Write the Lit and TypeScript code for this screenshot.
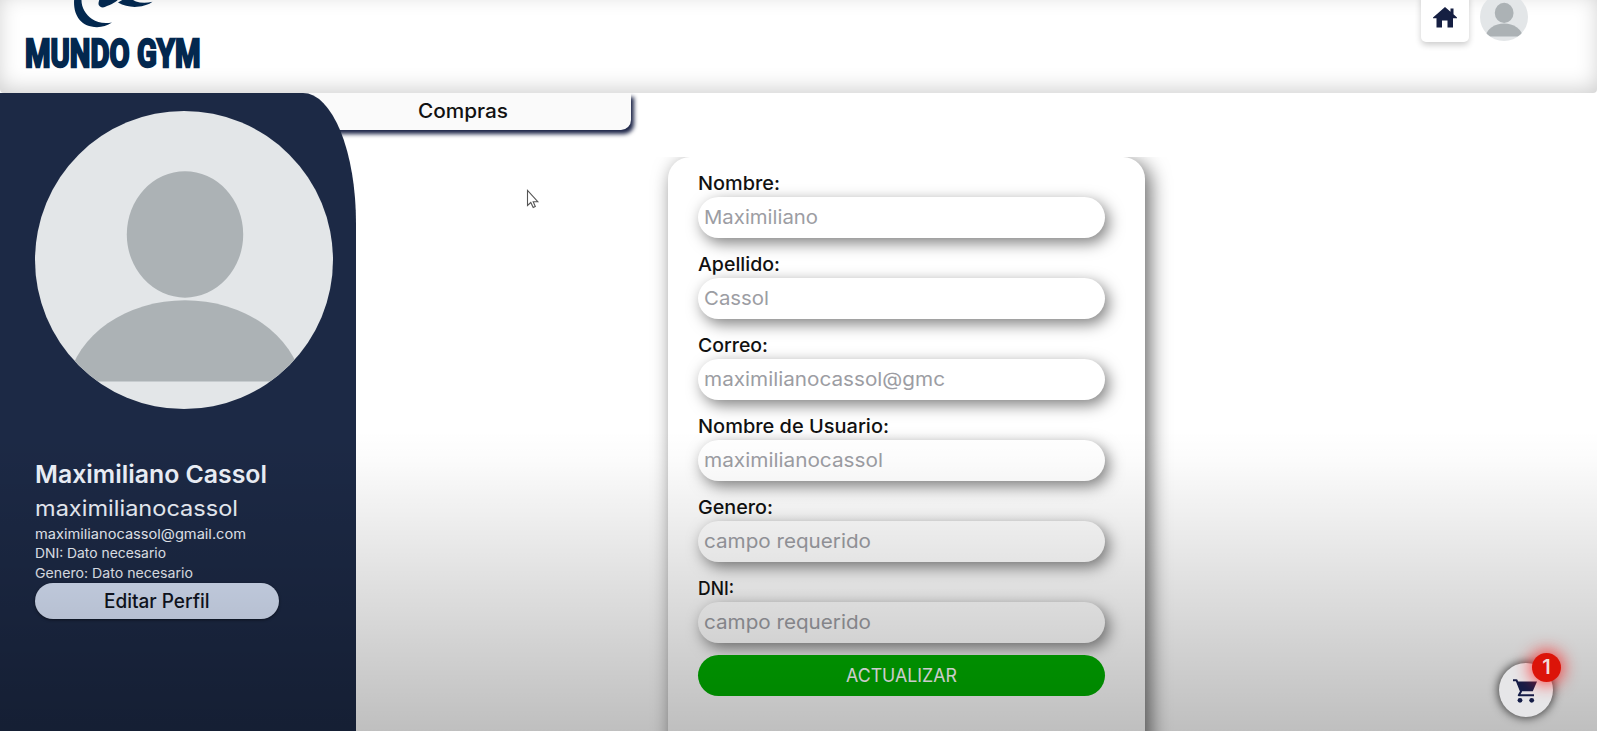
import { LitElement, html, css } from "lit";
import { customElement, property } from "lit/decorators.js";

/** Text run set to a fixed advance width, baseline placed inside a block of fixed height. */
@customElement("fit-text")
class FitText extends LitElement {
  @property() text = "";
  @property({ type: Number }) w = 100;
  @property({ type: Number }) h = 20;
  @property({ type: Number }) base = 16;
  static styles = css`
    :host { display: block; flex: none; }
    svg { display: block; overflow: visible; }
    text { fill: currentColor; stroke: currentColor; stroke-width: var(--stroke, 0); }
  `;
  render() {
    return html`<svg width=${this.w} height=${this.h}>
      <text x="0" y=${this.base} textLength=${this.w} lengthAdjust="spacingAndGlyphs">${this.text}</text>
    </svg>`;
  }
}

@customElement("user-avatar")
class UserAvatar extends LitElement {
  static styles = css`
    :host { display: block; flex: none; border-radius: 50%; overflow: hidden; background: #e3e6e8; }
    svg { display: block; width: 100%; height: 100%; }
  `;
  render() {
    return html`<svg viewBox="0 0 297 297">
      <g fill="#acb2b5">
        <ellipse cx="149.5" cy="123" rx="58" ry="63" />
        <path d="M32.8 269.500A118 95 0 0 1 266.2 269.500Z" />
      </g>
    </svg>`;
  }
}

const FIELDS = [
  { label: "Nombre:", lw: 82, value: "Maximiliano", vw: 114 },
  { label: "Apellido:", lw: 82, value: "Cassol", vw: 65 },
  { label: "Correo:", lw: 70, value: "maximilianocassol@gmc", vw: 241 },
  { label: "Nombre de Usuario:", lw: 191, value: "maximilianocassol", vw: 179 },
  { label: "Genero:", lw: 75, value: "campo requerido", vw: 167 },
  { label: "DNI:", lw: 36, value: "campo requerido", vw: 167 },
];

@customElement("app-root")
class AppRoot extends LitElement {
  static styles = css`
    :host {
      display: block; position: relative; height: 731px; overflow: hidden;
      background: #fff; font-family: Inter, "Open Sans", sans-serif; color: #111;
    }
    * { box-sizing: border-box; }
    .page { display: flex; flex-direction: column; height: 100%; }
    header {
      flex: none; height: 93px; display: flex; justify-content: space-between;
      padding: 0 69px 0 24px; border-radius: 0 0 4px 4px;
      box-shadow: inset 0 -5px 22px -2px rgba(0, 0, 0, 0.2);
    }
    .brand { color: #03284f; display: flex; flex-direction: column; }
    .brand svg { display: block; }
    .brand fit-text {
      font: 700 39px "Liberation Sans Narrow", "Roboto", sans-serif; --stroke: 2.4px; margin-left: 1px;
    }
    .actions { display: flex; gap: 11px; margin-top: -7px; height: 49px; }
    .home {
      width: 48px; height: 49px; border-radius: 5px; background: #fff; display: flex;
      justify-content: center; padding-top: 14px; box-shadow: 0 3px 6px rgba(0, 0, 0, 0.2);
    }
    .home svg { width: 24px; height: 21px; fill: #151f42; }
    .actions user-avatar { width: 48px; height: 48px; }
    .body { flex: 1; display: flex; min-height: 0; }
    aside {
      position: relative; z-index: 1; width: 356px; flex: none; background: #1c2945;
      border-top-right-radius: 53px 130px; padding: 18px 0 0 35px; color: #eef2fa;
    }
    aside user-avatar { width: 298px; height: 298px; }
    .info { margin: 47px 0 0 0; }
    .name { font-size: 24.5px; font-weight: 600; }
    .user { font-size: 22px; }
    .small { font-size: 13.5px; }
    .edit {
      width: 244px; height: 36px; border-radius: 18px; background: #d8e3f8;
      color: #101522; display: flex; justify-content: center; font-size: 19.5px;
      box-shadow: 0 1px 3px rgba(0, 0, 0, 0.5);
    }
    .med { font-weight: 500; }
    main { flex: 1; display: flex; flex-direction: column; }
    .tab {
      width: 330px; height: 37px; margin-left: -55px; flex: none; background: #fafafa;
      border-radius: 0 0 10px 10px; box-shadow: 3px 4px 4px #1c2447;
      padding-left: 117px; font-size: 19.5px;
    }
    .clip { clip-path: inset(0 -40px -40px 0); margin-left: -55px; padding-left: 55px; }
    .form-area { margin-top: 27px; flex: 1; overflow: hidden; padding-left: 312px; }
    .card {
      width: 477px; height: 700px; border-radius: 22px; background: #fff; padding: 13px 30px;
      box-shadow: 5px 5px 20px rgba(0, 0, 0, 0.6);
    }
    .label { font-size: 19px; }
    .input {
      height: 41px; width: 407px; margin-bottom: 13px; border-radius: 21px; background: #fff;
      box-shadow: 4px 5px 15px rgba(0, 0, 0, 0.5); padding-left: 6px; color: #9c9da3; font-size: 19px;
    }
    .submit {
      height: 41px; width: 407px; margin-top: -1px; border-radius: 21px; background: #00ae00; color: #fff;
      display: flex; justify-content: center; font-size: 19px; position: relative;
    }
    .shade {
      position: absolute; inset: 430px 0 0 0; z-index: 2; pointer-events: none;
      background: linear-gradient(rgba(0,0,0,0), rgba(0,0,0,.015) 10%, rgba(0,0,0,.25));
    }
    .cart {
      position: absolute; z-index: 3; left: 1499px; top: 663px; width: 54px; height: 54px;
      border-radius: 50%; background: #e6e6e8; box-shadow: 0 0 10px 1px rgba(0, 0, 0, 0.7);
    }
    .cart svg { position: absolute; left: 13px; top: 15px; width: 26px; height: 26px; }
    .badge {
      position: absolute; left: 33px; top: -10px; width: 29px; height: 29px; border-radius: 50%;
      background: #dc1409; color: #f3dcd8; box-shadow: 0 0 16px 3px rgba(255, 20, 20, 0.7);
      font: 600 20px/29px Inter, sans-serif; text-align: center;
    }
    .cursor { position: absolute; left: 526px; top: 189px; z-index: 3; }
  `;

  render() {
    return html`
      <div class="page">
        <header>
          <div class="brand">
            <svg width="176" height="31" viewBox="24 0 176 31" fill="currentColor">
              <path d="M74.300 -2C72.500 14 80 27 97 27.200Q105 27 112 22.500Q100 24.500 92 19C85 14 81 7 81.500 -2Z" />
              <path d="M100 -2C98 3 98 5 100 6.500Q103 8.500 107 6C111 5 113 3 116 1.500L119 -1H124L118 2.500Q127 7.500 137 6.800Q147 6 152.500 1.800Q143 4 136 1.500L129 -2Z" />
            </svg>
            <fit-text text="MUNDO GYM" .w=${175.5} .h=${40} .base=${35.5}></fit-text>
          </div>
          <div class="actions">
            <div class="home"><svg viewBox="0 0 24 21"><path d="M12 0L17.500 4.800V1.500H20.500V7.300L24 10.500V11.200H20V20.500H14.500V13.500H9V20.500H3.500V11.200H0V10.500Z" /></svg></div>
            <user-avatar></user-avatar>
          </div>
        </header>
        <div class="body">
          <aside>
            <user-avatar></user-avatar>
            <div class="info">
              <fit-text class="name" text="Maximiliano Cassol" .w=${232} .h=${36} .base=${27}></fit-text>
              <fit-text class="user" text="maximilianocassol" .w=${203} .h=${29.5} .base=${23.5}></fit-text>
              <fit-text class="small" text="maximilianocassol@gmail.com" .w=${211} .h=${20} .base=${16.5}></fit-text>
              <fit-text class="small" text="DNI: Dato necesario" .w=${131} .h=${20} .base=${15.5}></fit-text>
              <fit-text class="small" text="Genero: Dato necesario" .w=${158} .h=${21.5} .base=${15.5}></fit-text>
              <div class="edit med"><fit-text text="Editar Perfil" .w=${105.5} .h=${36} .base=${25}></fit-text></div>
            </div>
          </aside>
          <main>
            <div class="clip"><div class="tab med"><fit-text text="Compras" .w=${90} .h=${37} .base=${25}></fit-text></div></div>
            <div class="form-area">
              <div class="card">
                ${FIELDS.map((f) => html`
                  <fit-text class="label med" .text=${f.label} .w=${f.lw} .h=${27} .base=${20}></fit-text>
                  <div class="input"><fit-text .text=${f.value} .w=${f.vw} .h=${41} .base=${27}></fit-text></div>
                `)}
                <div class="submit"><fit-text text="ACTUALIZAR" .w=${111} .h=${41} .base=${27}></fit-text></div>
              </div>
            </div>
          </main>
        </div>
      </div>
      <div class="shade"></div>
      <div class="cart">
        <svg viewBox="0 0 26 26">
          <path d="M1 2.200H4.500L9 13.500L6.800 17.200H22" fill="none" stroke="#141d47" stroke-width="2" stroke-linejoin="round" />
          <path d="M4.800 3.600H25L20.800 13.200H8.500Z" fill="#141d47" />
          <circle cx="8" cy="22.300" r="2.400" fill="#141d47" />
          <circle cx="19.700" cy="22.300" r="2.400" fill="#141d47" />
        </svg>
        <div class="badge">1</div>
      </div>
      <svg class="cursor" width="14" height="21" viewBox="0 0 14 21">
        <path d="M1.500 1.500V16.500L4.800 13.500L7.200 18.500L9.300 17.500L7.200 12.700H11.800Z" fill="#fff" stroke="#555" stroke-width="1.100" />
      </svg>
    `;
  }
}
